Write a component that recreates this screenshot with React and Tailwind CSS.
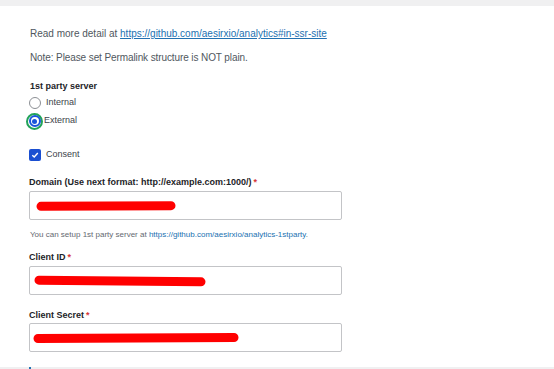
import React from 'react'

const font = { fontFamily: '"Liberation Sans", Arial, sans-serif' }

function Scribble({ width, tilt = 0 }) {
  return (
    <svg width={width + 10} height="14" className="block">
      <path
        d={`M5 ${7 + tilt} L${width + 5} ${7 - tilt}`}
        stroke="#ff0000"
        strokeWidth="9"
        strokeLinecap="round"
        fill="none"
      />
    </svg>
  )
}

function Field({ label, scribble, tilt, className = '', inputTop = 'mt-[3px]', pad = 'pl-[5px]' }) {
  return (
    <div className={className}>
      <div className="text-[9px] leading-[12px] font-bold text-[#1d2327]">
        {label}
        <span className="text-[#d63638] ml-[2px]">*</span>
      </div>
      <div
        className={`${inputTop} w-[313px] h-[29px] border border-[#c3c4c7] rounded-[2px] bg-white flex items-center ${pad}`}
      >
        <Scribble width={scribble} tilt={tilt} />
      </div>
    </div>
  )
}

export default function App() {
  return (
    <div className="w-[554px] h-[369px] bg-[#f0f0f1] pt-[6px] overflow-hidden" style={font}>
      <div className="h-[361px] bg-white pl-[29px] pt-[22px]">
        <p className="text-[10px] leading-[12px] text-[#50575e] pl-[1px]">
          Read more detail at{' '}
          <a className="text-[#2271b1] underline">
            https://github.com/aesirxio/analytics#in-ssr-site
          </a>
        </p>
        <p className="mt-[12px] text-[10px] leading-[12px] text-[#50575e] pl-[1px] tracking-[-0.1px]">
          Note: Please set Permalink structure is NOT plain.
        </p>

        <div className="mt-[16px] text-[9px] leading-[12px] font-bold text-[#1d2327] pl-[1px]">
          1st party server
        </div>

        <div className="mt-[2px] flex items-center h-[18px]">
          <span className="w-[12px] h-[12px] rounded-full border border-[#8c8f94] bg-white" />
          <span className="ml-[5px] text-[9px] text-[#3c434a]">Internal</span>
        </div>
        <div className="flex items-center h-[18px]">
          <span className="-ml-[3px] w-[17px] h-[17px] rounded-full border-[2px] border-[#22a35a] flex items-center justify-center">
            <span className="w-[12px] h-[12px] rounded-full border-[2px] border-[#1a56db] bg-white flex items-center justify-center">
              <span className="w-[5px] h-[5px] rounded-full bg-[#1a56db]" />
            </span>
          </span>
          <span className="ml-[1px] text-[9px] text-[#3c434a]">External</span>
        </div>

        <div className="mt-[19px] flex items-center h-[12px]">
          <span className="w-[12px] h-[12px] rounded-[2px] bg-[#1a4fd1] flex items-center justify-center">
            <svg width="8" height="8" viewBox="0 0 8 8">
              <path d="M1.3 4.2 L3.2 6 L6.8 2" stroke="#fff" strokeWidth="1.4" fill="none" />
            </svg>
          </span>
          <span className="ml-[5px] text-[9px] text-[#3c434a]">Consent</span>
        </div>

        <Field
          className="mt-[15px]"
          label="Domain (Use next format: http://example.com:1000/)"
          scribble={130}
          tilt={0.3}
          pad="pl-[6px]"
        />

        <p className="mt-[10px] text-[8px] leading-[10px] text-[#646970] pl-[1px]">
          You can setup 1st party server at{' '}
          <a className="text-[#2271b1]">https://github.com/aesirxio/analytics-1stparty</a>.
        </p>

        <Field className="mt-[11px]" label="Client ID" scribble={162} tilt={-0.8} pad="pl-[4px]" />
        <Field
          className="mt-[14px]"
          label="Client Secret"
          scribble={196}
          tilt={0.5}
          inputTop="mt-[2px]"
          pad="pl-[3px]"
        />
      </div>
      <div className="ml-[29px] w-[2px] h-[2px] bg-[#2271b1]" />
    </div>
  )
}
